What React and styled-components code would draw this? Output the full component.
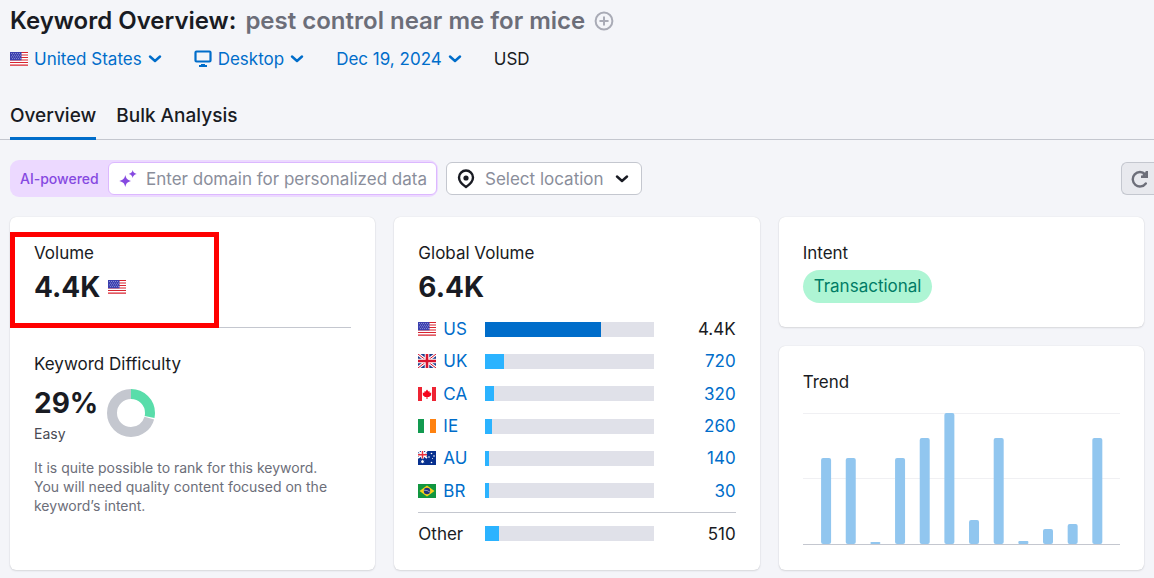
import styled, { createGlobalStyle } from "styled-components";

const countries = [
  { code: "US", volume: "4.4K", share: 69, main: true },
  { code: "UK", volume: "720", share: 11 },
  { code: "CA", volume: "320", share: 5 },
  { code: "IE", volume: "260", share: 4 },
  { code: "AU", volume: "140", share: 2 },
  { code: "BR", volume: "30", share: 2 },
];

const trend = [86, 86, 2, 86, 106, 131, 24, 106, 3, 15, 20, 106];

export default function App() {
  return (
    <>
      <GlobalStyle />
      <Header>
        <Title>
          Keyword Overview: <Phrase>pest control near me for mice</Phrase>
          <AddButton aria-label="Add keyword">
            <PlusIcon />
          </AddButton>
        </Title>
        <Filters>
          <FilterButton>
            <Flag code="US" />
            United States
            <Chevron />
          </FilterButton>
          <FilterButton>
            <DesktopIcon />
            Desktop
            <Chevron />
          </FilterButton>
          <FilterButton>
            Dec 19, 2024
            <Chevron />
          </FilterButton>
          <Currency>USD</Currency>
        </Filters>
        <Tabs>
          <Tab href="#overview" $active>
            Overview
          </Tab>
          <Tab href="#bulk">Bulk Analysis</Tab>
        </Tabs>
      </Header>

      <Toolbar>
        <AiBox>
          <AiLabel htmlFor="domain">AI-powered</AiLabel>
          <DomainField>
            <SparkleIcon />
            <DomainInput
              id="domain"
              placeholder="Enter domain for personalized data"
            />
          </DomainField>
        </AiBox>
        <LocationField>
          <PinIcon />
          <LocationSelect aria-label="Location">
            <option>Select location</option>
          </LocationSelect>
          <Chevron />
        </LocationField>
        <ReloadButton aria-label="Update metrics">
          <ReloadIcon />
        </ReloadButton>
      </Toolbar>

      <Cards>
        <Card>
          <Label>Volume</Label>
          <Value>
            4.4K <Flag code="US" />
          </Value>
          <Highlight />
          <Divider />
          <Label>Keyword Difficulty</Label>
          <Difficulty>
            <div>
              <Percent>29%</Percent>
              <Level>Easy</Level>
            </div>
            <Donut />
          </Difficulty>
          <Description>
            It is quite possible to rank for this keyword. You will need quality
            content focused on the keyword’s intent.
          </Description>
        </Card>

        <Card>
          <Label>Global Volume</Label>
          <Value>6.4K</Value>
          <VolumeTable>
            <tbody>
              {countries.map(({ code, volume, share, main }) => (
                <tr key={code}>
                  <NameCell>
                    <CountryLink href={`#${code}`}>
                      <Flag code={code} />
                      {code}
                    </CountryLink>
                  </NameCell>
                  <td>
                    <Track>
                      <Fill $main={main} style={{ width: `${share}%` }} />
                    </Track>
                  </td>
                  <VolumeCell>
                    {main ? volume : <a href={`#${code}`}>{volume}</a>}
                  </VolumeCell>
                </tr>
              ))}
            </tbody>
          </VolumeTable>
          <OtherTable>
            <tbody>
              <tr>
                <NameCell>Other</NameCell>
                <td>
                  <Track>
                    <Fill style={{ width: "8%" }} />
                  </Track>
                </td>
                <VolumeCell>510</VolumeCell>
              </tr>
            </tbody>
          </OtherTable>
        </Card>

        <Stack>
          <Card>
            <Label>Intent</Label>
            <Pill>Transactional</Pill>
          </Card>
          <TrendCard>
            <Label>Trend</Label>
            <TrendChart />
          </TrendCard>
        </Stack>
      </Cards>
    </>
  );
}

function TrendChart() {
  return (
    <Chart role="img" aria-label="Search volume trend">
      <rect width="100%" height="1" fill="#f0f0f3" />
      <rect y="65" width="100%" height="1" fill="#f0f0f3" />
      {trend.map((height, index) => (
        <rect
          key={index}
          x={`${5.7 + index * 7.77}%`}
          y={131 - height}
          width="10"
          height={height}
          rx={height > 4 ? 2 : 1}
          fill="#91c6ef"
        />
      ))}
      <rect y="131" width="100%" height="1" fill="#c4c7cf" />
    </Chart>
  );
}

function Donut() {
  return (
    <svg width="48" height="48" viewBox="0 0 48 48" aria-hidden="true">
      <g fill="none" strokeWidth="10" transform="rotate(-90 24 24)">
        <circle
          cx="24"
          cy="24"
          r="19"
          stroke="#c4c7cf"
          pathLength="100"
          strokeDasharray="70.6 29.4"
          strokeDashoffset="-29.4"
        />
        <circle
          cx="24"
          cy="24"
          r="19"
          stroke="#59ddaa"
          pathLength="100"
          strokeDasharray="28.4 71.6"
        />
      </g>
    </svg>
  );
}

const flags = {
  US: (
    <>
      <rect width="18" height="14" fill="#fff" />
      <path
        d="M0 .5h18M0 3h18M0 5.5h18M0 8h18M0 10.5h18M0 13.2h18"
        stroke="#d8232f"
        strokeWidth="1.2"
      />
      <rect width="11.5" height="8.3" fill="#3a3fae" />
      <path
        d="M1 1.5h10M2 3.2h9M1 4.9h10M2 6.6h9"
        stroke="#b9bbea"
        strokeWidth=".8"
        strokeDasharray=".8 1.2"
      />
    </>
  ),
  UK: (
    <>
      <rect width="18" height="14" fill="#1c3c8c" />
      <path d="M0 0l18 14M18 0L0 14" stroke="#fff" strokeWidth="3" />
      <path d="M0 0l18 14M18 0L0 14" stroke="#d8142f" strokeWidth="1" />
      <path d="M9 0v14M0 7h18" stroke="#fff" strokeWidth="4.6" />
      <path d="M9 0v14M0 7h18" stroke="#d8142f" strokeWidth="2.6" />
    </>
  ),
  CA: (
    <>
      <rect width="18" height="14" fill="#fff" />
      <path d="M0 0h4v14H0zM14 0h4v14h-4z" fill="#ee2433" />
      <path
        d="M9 2.5l1.4 2 1.2-.2v1.500l1.800 0-.4 1.400.4.800-2.400 2H9.500v2h-1v-2H7L4.600 8l.4-.8-.4-1.400h1.800V4.300l1.200.2z"
        fill="#f5051d"
      />
    </>
  ),
  IE: (
    <>
      <rect width="18" height="14" fill="#fff" />
      <path d="M0 0h6v14H0z" fill="#129a50" />
      <path d="M12 0h6v14h-6z" fill="#ff8210" />
    </>
  ),
  AU: (
    <>
      <rect width="18" height="14" fill="#07308f" />
      <path d="M0 0l9 7M9 0L0 7" stroke="#fff" strokeWidth="1.6" />
      <path d="M4.5 0v7.5M0 3.7h9" stroke="#fff" strokeWidth="3" />
      <path d="M4.5 0v7.5M0 3.7h9" stroke="#e8303c" strokeWidth="1.5" />
      <g fill="#fff">
        <path d="M4.5 8.5l.6 1.2 1.4-.2-.9 1 .9 1.1-1.4-.2-.6 1.2-.6-1.2-1.4.2.9-1.1-.9-1 1.4.2z" />
        <circle cx="13.5" cy="2.5" r=".8" />
        <circle cx="11" cy="6" r=".8" />
        <circle cx="16" cy="5" r=".8" />
        <circle cx="14.5" cy="7.5" r=".5" />
        <circle cx="13.5" cy="11.5" r=".8" />
      </g>
    </>
  ),
  BR: (
    <>
      <rect width="18" height="14" fill="#119640" />
      <path d="M9 1.5L16.5 7 9 12.5 1.5 7z" fill="#f8d01c" />
      <circle cx="9" cy="7" r="3.2" fill="#22307c" />
      <path d="M6 6.2q3.5-.3 6 2" stroke="#dfe6ef" strokeWidth=".6" fill="none" />
    </>
  ),
};

function Flag({ code }) {
  return (
    <svg width="18" height="14" viewBox="0 0 18 14" aria-hidden="true">
      {flags[code]}
    </svg>
  );
}

function Chevron() {
  return (
    <svg width="14" height="8" viewBox="0 0 14 8" fill="none" aria-hidden="true">
      <path
        d="M2 1.5l5 4.5 5-4.5"
        stroke="currentColor"
        strokeWidth="2.4"
        strokeLinecap="round"
        strokeLinejoin="round"
      />
    </svg>
  );
}

function PlusIcon() {
  return (
    <svg width="20" height="20" viewBox="0 0 20 20" fill="none">
      <circle cx="10" cy="10" r="8.4" stroke="#a9abb6" strokeWidth="2" />
      <path
        d="M10 6.2v7.6M6.2 10h7.6"
        stroke="#a9abb6"
        strokeWidth="2"
        strokeLinecap="round"
      />
    </svg>
  );
}

function DesktopIcon() {
  return (
    <svg width="18" height="18" viewBox="0 0 18 18" fill="none" aria-hidden="true">
      <rect
        x="1.5"
        y="1.5"
        width="15"
        height="10"
        rx="1"
        stroke="currentColor"
        strokeWidth="2.2"
      />
      <path d="M7 14h4v1h2V17H5V15H7z" fill="currentColor" />
    </svg>
  );
}

function SparkleIcon() {
  return (
    <svg width="18" height="18" viewBox="0 0 18 18" fill="#8649e1" aria-hidden="true">
      <path d="M6.3 5c.9 3.7 1.8 4.6 5.7 5.9-3.9 1.3-4.8 2.2-5.7 6.1-.9-3.9-1.8-4.8-6-6.1C4.5 9.6 5.4 8.7 6.3 5z" />
      <path d="M13.7 0c.5 2.4 1.3 3.2 4 4-2.7.8-3.5 1.6-4 4-.5-2.4-1.3-3.2-4-4 2.7-.8 3.5-1.6 4-4z" />
    </svg>
  );
}

function PinIcon() {
  return (
    <svg width="18" height="20" viewBox="0 0 18 20" fill="none" aria-hidden="true">
      <path
        d="M9 18C6 16 2 12.5 2 8.5a7 7 0 0 1 14 0c0 4-4 7.5-7 9.5z"
        stroke="#191b23"
        strokeWidth="2.4"
        strokeLinejoin="round"
      />
      <circle cx="9" cy="9" r="2.6" fill="#191b23" />
    </svg>
  );
}

function ReloadIcon() {
  return (
    <svg width="18" height="18" viewBox="0 0 18 18" fill="none" stroke="#6c6e79">
      <path
        d="M14.8 13.5a7.2 7.2 0 1 1-.6-9.2"
        strokeWidth="2.4"
        strokeLinecap="round"
      />
      <path d="M15.8 1v5.8H10" strokeWidth="2.4" />
      <path d="M12 6l3.5-3" strokeWidth="2.4" />
    </svg>
  );
}

const GlobalStyle = createGlobalStyle`
  * {
    box-sizing: border-box;
  }

  body {
    margin: 0;
    background-color: #f4f5f9;
    color: #191b23;
    font-family: Inter, "Liberation Sans", sans-serif;
    font-size: 17px;
    line-height: 24px;
  }

  a {
    color: #006dca;
    text-decoration: none;
  }

  button,
  input,
  select {
    font: inherit;
  }

  svg {
    display: block;
    flex-shrink: 0;
  }
`;

const Header = styled.header`
  padding: 4px 10px 0;
  border-bottom: 1px solid #c4c7cf;
`;

const Title = styled.h1`
  display: flex;
  align-items: center;
  gap: 9px;
  margin: 0;
  font-size: 24px;
  font-weight: 600;
  line-height: 34px;
`;

const Phrase = styled.span`
  color: #6c6e79;
`;

const AddButton = styled.button`
  padding: 0;
  border: none;
  background: none;
`;

const Filters = styled.div`
  display: flex;
  align-items: center;
  gap: 32px;
  margin-top: 8px;
`;

const FilterButton = styled.button`
  display: flex;
  align-items: center;
  gap: 6px;
  padding: 0;
  border: none;
  background: none;
  color: #006dca;
`;

const Currency = styled.span`
  line-height: 26px;
`;

const Tabs = styled.nav`
  display: flex;
  gap: 20px;
  margin: 26px 0 -1px;
`;

const Tab = styled.a`
  padding: 4px 0 7px;
  border-bottom: 3px solid ${({ $active }) => ($active ? "#006dca" : "transparent")};
  color: #191b23;
  font-size: 19px;
  font-weight: 500;
  line-height: 28px;
`;

const Toolbar = styled.div`
  display: flex;
  align-items: center;
  gap: 8px;
  padding: 20px 0 20px 10px;
`;

const AiBox = styled.div`
  display: flex;
  align-items: center;
  width: 428px;
  padding: 2px 1px 2px 10px;
  border-radius: 9px;
  background-color: #ecd9ff;
`;

const AiLabel = styled.label`
  flex: 1;
  color: #8649e1;
  font-size: 14px;
  font-weight: 500;
`;

const DomainField = styled.div`
  display: flex;
  align-items: center;
  gap: 9px;
  width: 329px;
  height: 33px;
  padding: 0 7px 0 10px;
  border: 1px solid #dcb8ff;
  border-radius: 6px;
  background-color: #fff;
`;

const DomainInput = styled.input`
  flex: 1;
  min-width: 0;
  padding: 0;
  border: none;
  outline: none;
  background: none;

  &::placeholder {
    color: #8a8e9b;
    opacity: 1;
  }
`;

const LocationField = styled.div`
  display: flex;
  align-items: center;
  gap: 10px;
  width: 196px;
  height: 33px;
  padding: 0 12px 0 10px;
  border: 1px solid #c4c7cf;
  border-radius: 6px;
  background-color: #fff;
`;

const LocationSelect = styled.select`
  flex: 1;
  min-width: 0;
  padding: 0;
  border: none;
  appearance: none;
  background: none;
  color: #8a8e9b;
`;

const ReloadButton = styled.button`
  width: 33px;
  height: 33px;
  margin-left: auto;
  padding: 0 0 0 9px;
  border: 1px solid #c4c7cf;
  border-right: none;
  border-radius: 6px 0 0 6px;
  background-color: #e8e9ee;
`;

const Cards = styled.main`
  display: grid;
  grid-template-columns: repeat(3, 1fr);
  gap: 19px;
  padding: 0 10px 8px;
`;

const Card = styled.section`
  position: relative;
  padding: 24px;
  border-radius: 6px;
  background-color: #fff;
  box-shadow: 0 1px 2px rgba(25, 27, 35, 0.12), 0 0 1px rgba(25, 27, 35, 0.16);
`;

const Stack = styled.div`
  display: flex;
  flex-direction: column;
  gap: 19px;
`;

const TrendCard = styled(Card)`
  flex: 1;
`;

const Label = styled.h2`
  margin: 0;
  font-size: 17px;
  font-weight: 400;
`;

const Value = styled.div`
  display: flex;
  align-items: center;
  gap: 8px;
  font-size: 28px;
  font-weight: 700;
  line-height: 44px;
`;

const Highlight = styled.div`
  position: absolute;
  top: 15px;
  left: 0;
  width: 209px;
  height: 96px;
  border: 5px solid #ff0000;
`;

const Divider = styled.hr`
  margin: 18px 0 24px;
  border: none;
  border-top: 1px solid #c4c7cf;
`;

const Difficulty = styled.div`
  display: flex;
  align-items: center;
  gap: 9px;
  margin-top: 6px;
`;

const Percent = styled.div`
  font-size: 28px;
  font-weight: 700;
  line-height: 42px;
`;

const Level = styled.div`
  color: #484a54;
  font-size: 14px;
  line-height: 20px;
`;

const Description = styled.p`
  margin: 14px 0 0;
  padding-right: 16px;
  color: #6c6e79;
  font-size: 14px;
  line-height: 19px;
`;

const VolumeTable = styled.table`
  width: 100%;
  height: 194px;
  margin-top: 4px;
  border-collapse: collapse;
  table-layout: fixed;

  td {
    padding: 0;
  }
`;

const OtherTable = styled(VolumeTable)`
  height: 34px;
  margin-top: 5px;
  border-top: 1px solid #c4c7cf;

  td {
    padding-top: 8px;
  }
`;

const NameCell = styled.td`
  width: 67px;
`;

const VolumeCell = styled.td`
  width: 82px;
  text-align: right;
`;

const CountryLink = styled.a`
  display: flex;
  align-items: center;
  gap: 7px;
`;

const Track = styled.div`
  height: 15px;
  background-color: #e0e1e9;
`;

const Fill = styled.div`
  height: 100%;
  background-color: ${({ $main }) => ($main ? "#006dca" : "#2bb3ff")};
`;

const Pill = styled.span`
  display: inline-block;
  margin-top: 5px;
  padding: 0 11px;
  border-radius: 17px;
  background-color: #aef5d4;
  color: #007c65;
  line-height: 33px;
  vertical-align: top;
`;

const Chart = styled.svg`
  width: 100%;
  height: 132px;
  margin-top: 19px;
`;
